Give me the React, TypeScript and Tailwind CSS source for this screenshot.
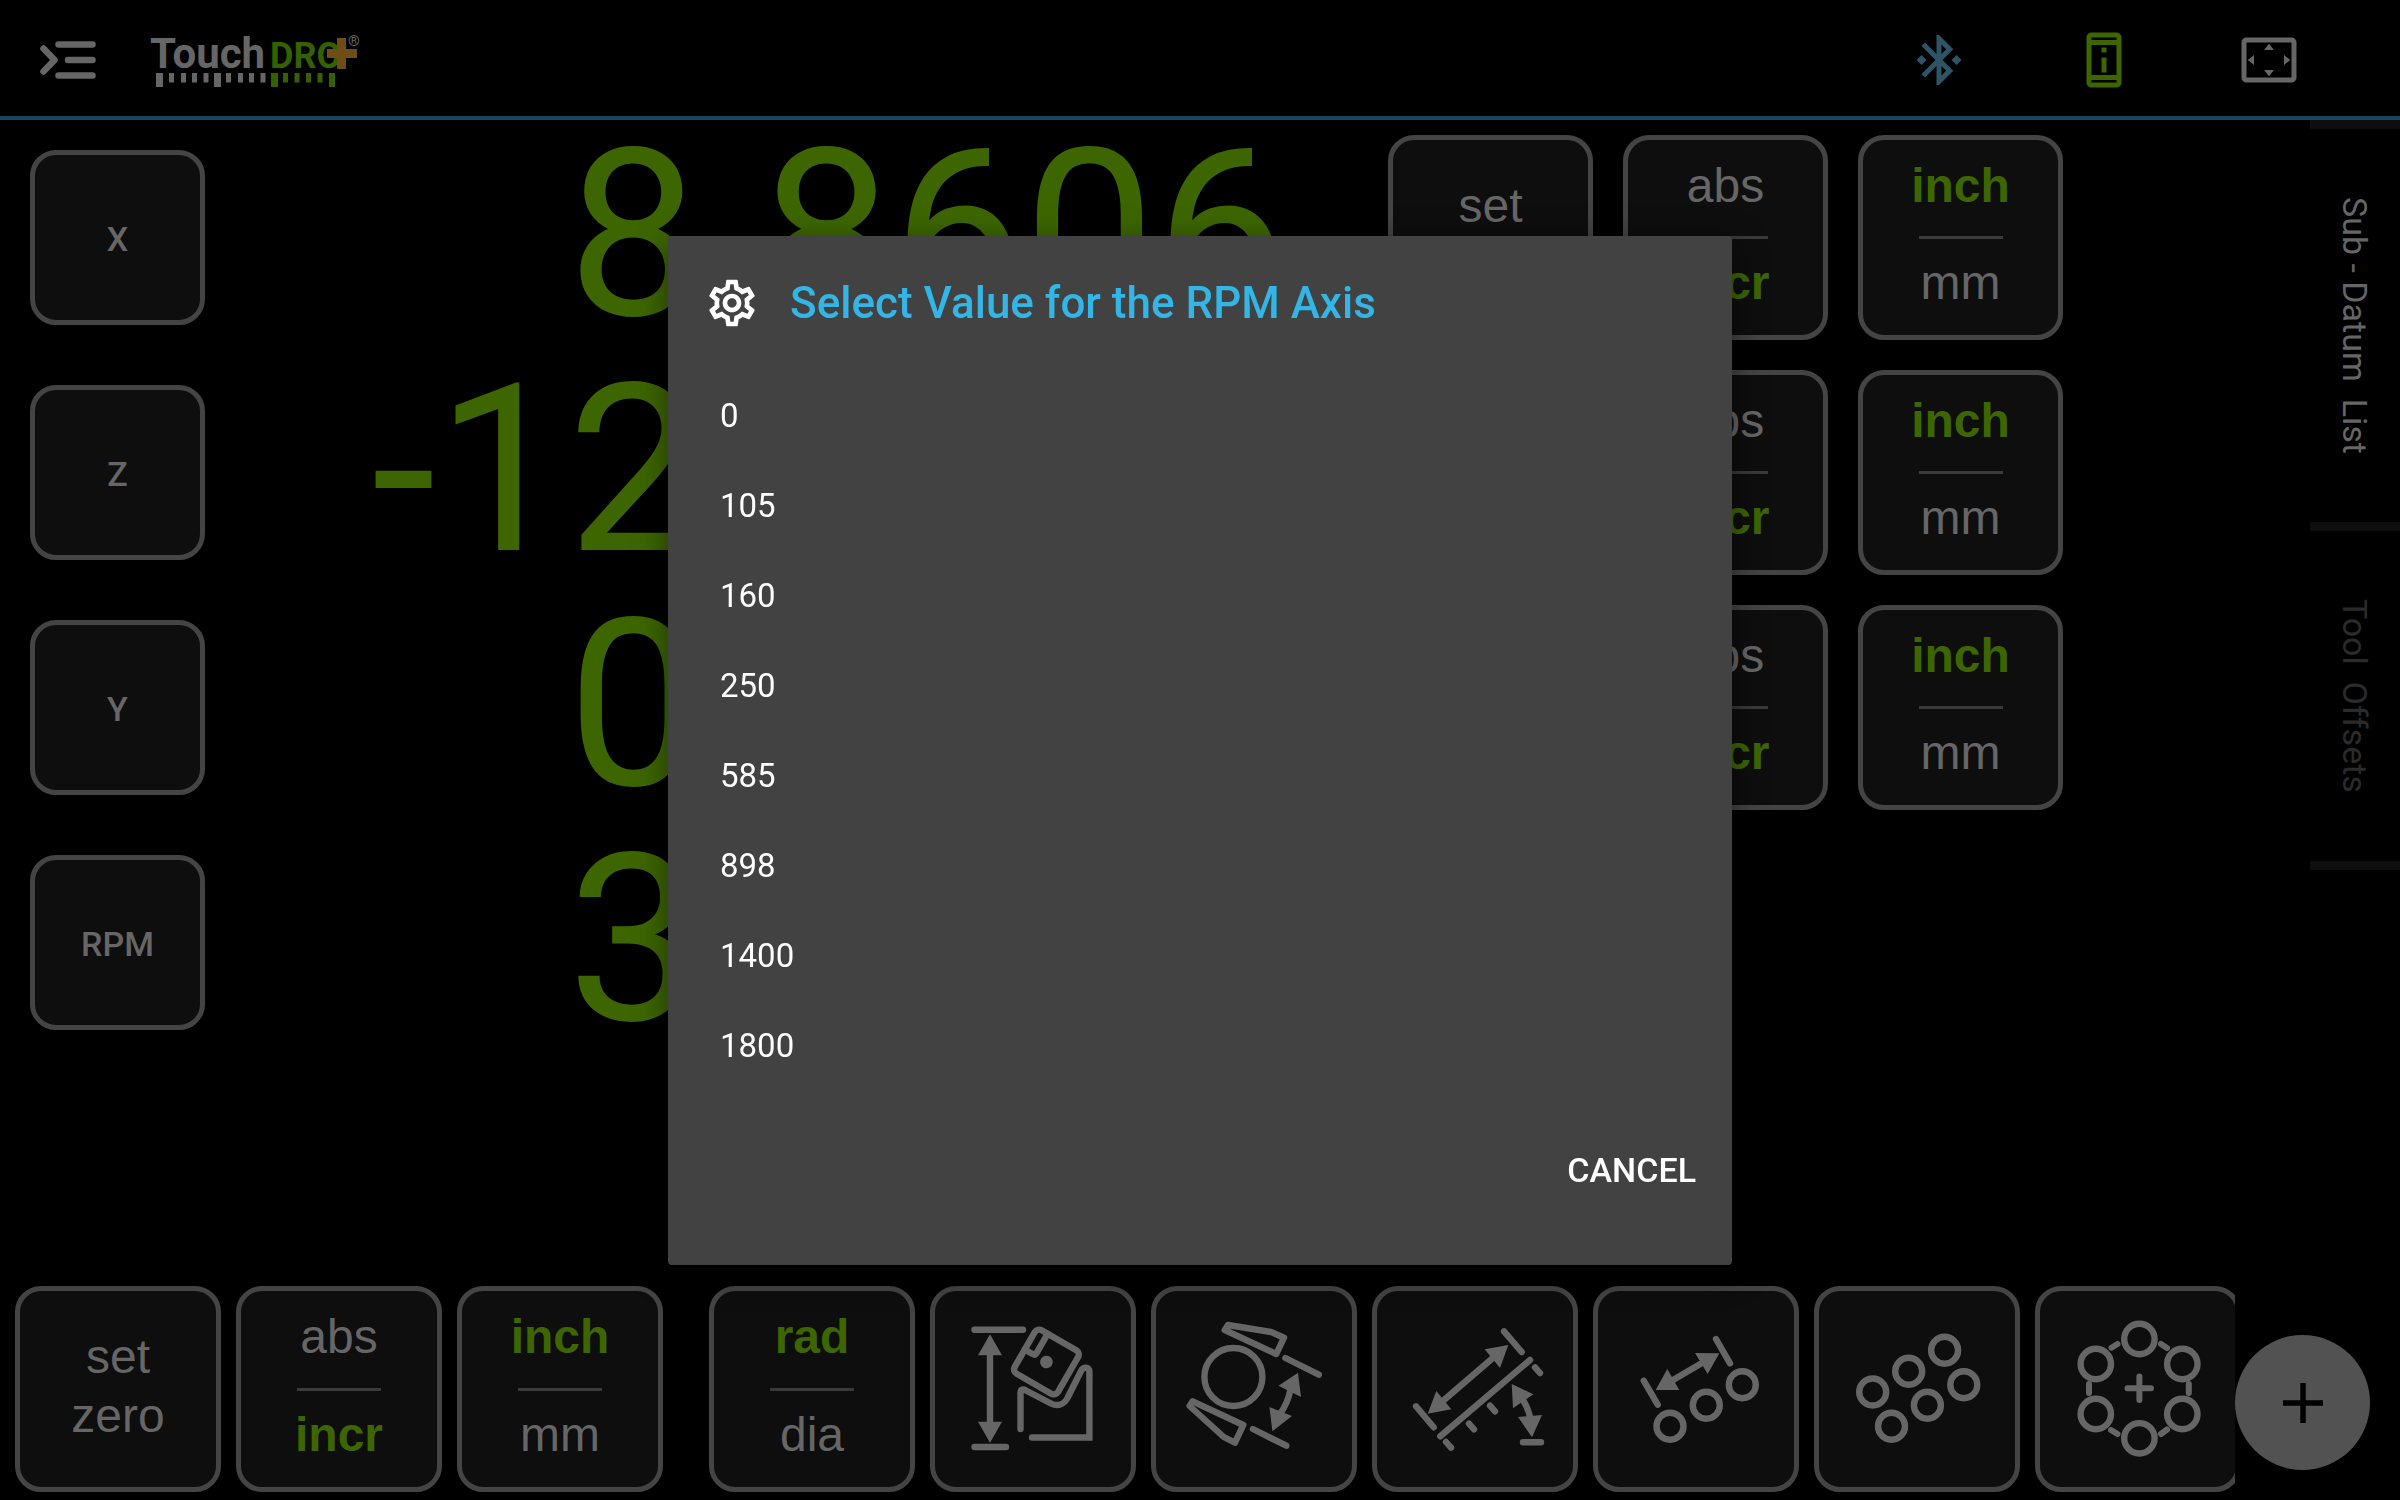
import type { ReactNode } from "react";
import {
  MdBluetoothConnected,
  MdOutlinePermDeviceInformation,
  MdOutlineSettings,
  MdOutlineSettingsOverscan,
} from "react-icons/md";

type Axis = {
  name: string;
  whole: string;
  fraction?: string;
  linear: boolean;
};

const axes: Axis[] = [
  { name: "X", whole: "8", fraction: ".8606", linear: true },
  { name: "Z", whole: "-12", linear: true },
  { name: "Y", whole: "0", linear: true },
  { name: "RPM", whole: "3", linear: false },
];

const rpmValues = ["0", "105", "160", "250", "585", "898", "1400", "1800"];

const keyClass =
  "shrink-0 rounded-[26px] border-[5px] border-[#444444] bg-[#0e0e0e] font-['Liberation_Sans',sans-serif] text-[48px] text-[#666666]";

export default function App() {
  return (
    <div className="flex min-h-screen flex-col bg-black font-[Roboto,sans-serif] text-[#666666]">
      <Header />
      <main className="flex flex-1">
        <section className="flex-1">
          {axes.map((axis) => (
            <AxisRow key={axis.name} axis={axis} />
          ))}
        </section>
        <SideTabs />
      </main>
      <Toolbar />
      <ValueDialog />
    </div>
  );
}

function Header() {
  return (
    <header className="flex h-[120px] items-center border-b-4 border-[#15465c] pl-10 pr-[101px] pt-1">
      <button aria-label="Menu">
        <svg
          className="h-12 w-14"
          viewBox="0 0 56 48"
          fill="none"
          stroke="#666666"
          strokeWidth="6.500"
          strokeLinecap="round"
          strokeLinejoin="round"
        >
          <path d="M3.500 12.500L14.500 24L3.500 35.500M18.500 8.500H52.500M28 24H52.500M18.500 39.500H52.500" />
        </svg>
      </button>
      <Logo />
      <div className="ml-auto flex gap-[105px]">
        <button aria-label="Bluetooth">
          <MdBluetoothConnected className="size-[60px] text-[#2d5567]" />
        </button>
        <button aria-label="Device info">
          <MdOutlinePermDeviceInformation className="size-[60px] text-[#3d6600]" />
        </button>
        <button aria-label="Full screen">
          <MdOutlineSettingsOverscan className="size-[60px]" />
        </button>
      </div>
    </header>
  );
}

const grayTicks = [19, 31, 42, 53.5, 76, 88, 99, 110.5];
const greenTicks = [133, 144.5, 156, 167.5];

function Logo() {
  return (
    <svg className="ml-[54px] h-[70px] w-[216px]" viewBox="0 -10 216 70">
      <text x="0" y="33" fill="#666666" className="font-[Roboto] text-[42px] font-bold">
        Touch
      </text>
      <text x="120" y="33" fill="#346000" className="font-[Roboto] text-[36px] font-bold">
        DRO
      </text>
      <path fill="#6e4e17" d="M187 3H196V14H207V23H196V34H187V23H177V14H187Z" />
      <text x="198" y="11" fill="#666666" className="font-[Roboto] text-[15px]">
        ®
      </text>
      <g fill="#666666">
        <rect x="6" y="38" width="7" height="14" />
        <rect x="64" y="38" width="7" height="14" />
        {grayTicks.map((x) => (
          <rect key={x} x={x} y="38" width="5" height="9.500" />
        ))}
      </g>
      <g fill="#346000">
        <rect x="121" y="38" width="7" height="14" />
        <rect x="179" y="38" width="6" height="14" />
        {greenTicks.map((x) => (
          <rect key={x} x={x} y="38" width="5" height="9.500" />
        ))}
      </g>
    </svg>
  );
}

function AxisRow({ axis }: { axis: Axis }) {
  return (
    <div className="flex h-[235px] items-center pl-[30px] pr-[247px]">
      <button className="size-[175px] shrink-0 rounded-[26px] border-[5px] border-[#444444] bg-[#0e0e0e] pt-1 text-[34px] font-medium">
        {axis.name}
      </button>
      <div className="flex flex-1 pb-[6px] text-[234px] leading-none text-[#3d6600]">
        <span className="flex-1 text-right">{axis.whole}</span>
        <span className="w-[689px]">{axis.fraction}</span>
      </div>
      <div className="flex w-[675px] gap-[30px]">
        {axis.linear && (
          <>
            <SetZeroKey size="size-[205px]" />
            <ToggleKey size="size-[205px]" top="abs" bottom="incr" active="bottom" />
            <ToggleKey size="size-[205px]" top="inch" bottom="mm" active="top" />
          </>
        )}
      </div>
    </div>
  );
}

function SetZeroKey({ size }: { size: string }) {
  return (
    <button className={`${keyClass} ${size} pb-[6px] leading-[59px]`}>
      set
      <br />
      zero
    </button>
  );
}

function ToggleKey({
  size,
  top,
  bottom,
  active,
}: {
  size: string;
  top: string;
  bottom: string;
  active: "top" | "bottom";
}) {
  const on = "font-bold text-[#3d6600]";
  return (
    <button
      className={`${keyClass} ${size} grid grid-rows-[1fr_3px_1fr] items-center justify-items-center leading-none`}
    >
      <span className={`pb-1 ${active === "top" ? on : ""}`}>{top}</span>
      <span className="h-[3px] w-[84px] bg-[#3a3a3a]" />
      <span className={`pb-2 ${active === "bottom" ? on : ""}`}>{bottom}</span>
    </button>
  );
}

function SideTabs() {
  return (
    <nav className="flex w-[90px] flex-col items-stretch text-[34px] leading-10">
      <button className="flex justify-center border-y-[9px] border-[#0e0e0e] py-[68px]">
        <span className="whitespace-pre [writing-mode:vertical-rl]">Sub - Datum  List</span>
      </button>
      <button className="flex justify-center border-b-[9px] border-[#0e0e0e] py-[68px] text-[#2b2b2b]">
        <span className="whitespace-pre [writing-mode:vertical-rl]">Tool  Offsets</span>
      </button>
    </nav>
  );
}

function ToolKey({ label, children }: { label: string; children: ReactNode }) {
  return (
    <button aria-label={label} className={`${keyClass} size-[206px]`}>
      <svg
        className="size-full"
        viewBox="5 5 196 196"
        fill="none"
        stroke="#666666"
        strokeWidth="6.400"
        strokeLinecap="round"
        strokeLinejoin="round"
      >
        {children}
      </svg>
    </button>
  );
}

function Holes({ r, at }: { r: number; at: number[][] }) {
  return (
    <>
      {at.map(([x, y]) => (
        <circle key={`${x}-${y}`} cx={x} cy={y} r={r} />
      ))}
    </>
  );
}

function Heads({ d }: { d: string }) {
  return <path d={d} fill="#666666" stroke="none" />;
}

function Toolbar() {
  return (
    <footer className="flex items-end">
      <div className="flex w-0 flex-1 gap-[15px] overflow-hidden pb-2 pl-[15px]">
        <SetZeroKey size="size-[206px]" />
        <ToggleKey size="size-[206px]" top="abs" bottom="incr" active="bottom" />
        <ToggleKey size="size-[206px]" top="inch" bottom="mm" active="top" />
        <span className="w-4 shrink-0" />
        <ToggleKey size="size-[206px]" top="rad" bottom="dia" active="top" />
        <ToolKey label="Workpiece height">
          <path d="M44.500 43.700H93M44.500 161H76M60 65V140" />
          <Heads d="M60 48.300L72 69.300H48ZM60 156.700L72 135.700H48Z" />
          <g transform="translate(116.400 76) rotate(30)">
            <rect x="-25" y="-25" width="50" height="50" rx="5" />
            <path d="M-13 -25V-3Q-13 0 -16 0H-25" />
            <circle r="6.300" fill="#666666" stroke="none" />
          </g>
          <path
            strokeLinejoin="miter"
            d="M90.500 143V107C90.500 103 93.500 103 96 104.500L121 117.500C128 121 134.500 118.500 138 111L151 85C153 81 159.400 80 159.400 86V151.500H102"
          />
        </ToolKey>
        <ToolKey label="Chuck diameter">
          <circle cx="82.400" cy="91" r="29" />
          <path d="M77 39L120 46L133 51.700L125.300 68L73.700 44ZM41.600 115.300L92.300 139L84 156.700L72.800 151L38.600 120Z" />
          <path d="M134.400 72L167.800 88.700M101.900 143L135.300 159.700M139.500 103Q137 117 129 128" />
          <Heads d="M147 86.700L127.500 99.700L150 111ZM121.400 145.300L118.400 121L141 130Z" />
        </ToolKey>
        <ToolKey label="Angled line">
          <path d="M132 45.300L149.700 66M44 120.300L61.700 141.300M158 74L68.300 150.300M122 71L72 114" />
          <path d="M163 81.300L168 87M118 119.700L123 125.300M97 137.700L102 143.300M74 156L79 161.700M151 156.300H169" />
          <path d="M151 114Q156 122 158.300 132" />
          <Heads d="M136.300 59L112.700 63.300L128 82ZM55.700 127.700L64.300 105L79.300 123.300ZM139.700 98L161.300 108.300L141 122.300ZM160 151.300L146 131L170 129Z" />
        </ToolKey>
        <ToolKey label="Hole line">
          <Holes r={13.5} at={[[77, 140.3], [113.3, 119.3], [149.3, 98.7]]} />
          <path d="M123 53L137 77.300M50.700 94.700L64.700 118.700M109 77L80 94" />
          <Heads d="M126.300 67.300L102 67L114.700 88ZM62.700 104L74.300 83L86.300 104Z" />
        </ToolKey>
        <ToolKey label="Hole grid">
          <Holes
            r={13.5}
            at={[
              [130.6, 64.3],
              [94.7, 85.3],
              [58.7, 106],
              [149.8, 98.7],
              [113.4, 119.3],
              [77.5, 140.3],
            ]}
          />
        </ToolKey>
        <ToolKey label="Bolt circle">
          <Holes
            r={15.2}
            at={[
              [104.4, 53],
              [60.8, 78],
              [147.3, 78],
              [60.8, 128],
              [147.3, 128],
              [104.4, 152.3],
            ]}
          />
          <path
            strokeWidth="6"
            d="M76.500 61.700L82.500 58M126 58L132 62M54 98V107M153.800 98V107M76 144L82.500 148M126 148L132 143.500M92.500 102.300H116M104.400 90.500V114"
          />
        </ToolKey>
      </div>
      <button
        aria-label="Add"
        className="mb-[30px] mr-[30px] flex size-[135px] shrink-0 items-center justify-center rounded-full bg-[#525252]"
      >
        <svg className="size-10" viewBox="0 0 40 40" stroke="#000000" strokeWidth="5.500">
          <path d="M0 20H40M20 0V40" />
        </svg>
      </button>
    </footer>
  );
}

function ValueDialog() {
  return (
    <div className="fixed inset-0 flex items-center justify-center">
      <div
        role="dialog"
        aria-labelledby="dialog-title"
        className="w-[1064px] max-w-full rounded-[4px] bg-[#424242] text-white shadow-[0_8px_32px_rgba(0,0,0,0.5)]"
      >
        <div className="flex h-[135px] items-center gap-[30px] pl-9">
          <MdOutlineSettings className="size-14 shrink-0" />
          <h2 id="dialog-title" className="text-[44px] font-medium leading-[56px] text-[#33b5e5]">
            Select Value for the RPM Axis
          </h2>
        </div>
        <ul className="text-[33px]">
          {rpmValues.map((value) => (
            <li key={value}>
              <button className="h-[90px] w-full pl-[52px] text-left">{value}</button>
            </li>
          ))}
        </ul>
        <div className="flex justify-end px-9 pb-[49px] pt-[35px]">
          <button className="h-[90px] text-[34px] font-medium">CANCEL</button>
        </div>
      </div>
    </div>
  );
}
